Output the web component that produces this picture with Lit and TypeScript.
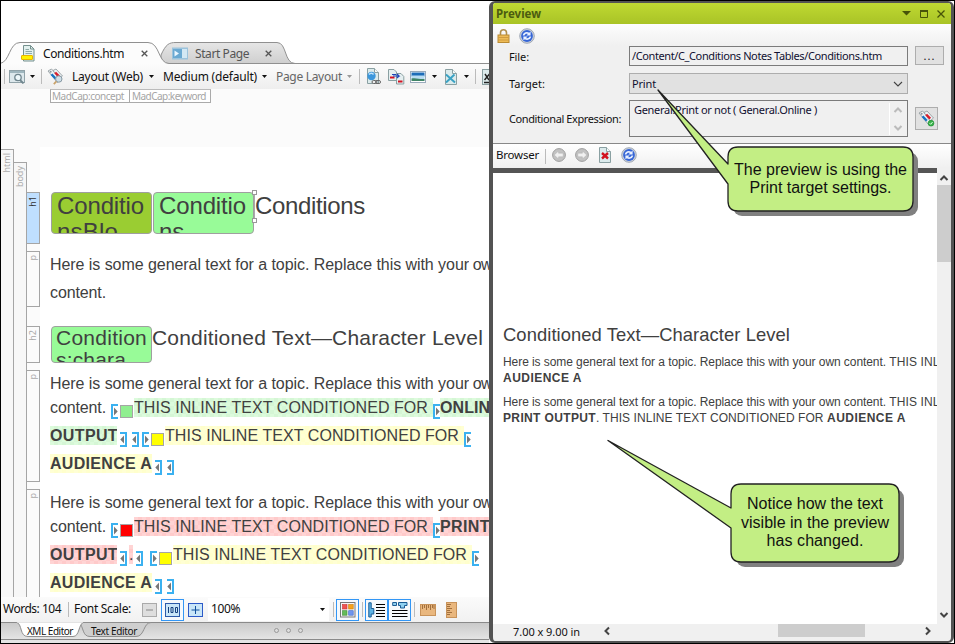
import { LitElement, html, css, svg, nothing } from "lit";
import { customElement, property } from "lit/decorators.js";
import { styleMap } from "lit/directives/style-map.js";

/** A run of text whose letter spacing is adjusted so that it fills a given width. */
@customElement("fit-text")
class FitText extends LitElement {
  @property({ type: Number }) w = 0;
  @property() text = "";
  static styles = css`
    :host { display: inline-block; white-space: pre; flex: none; }
    span { display: inline-block; white-space: pre; }
  `;
  firstUpdated() {
    const s = this.renderRoot.querySelector("span") as HTMLElement;
    const natural = s.getBoundingClientRect().width;
    s.style.letterSpacing = `${(this.w - natural) / this.text.length}px`;
  }
  render() {
    return html`<span>${this.text}</span>`;
  }
}

const t = (text: string, w: number) => html`<fit-text .w=${w} .text=${text}></fit-text>`;

type Run = { k: "text" | "open" | "close" | "sq"; gap?: number; text?: string; w?: number; box?: number; tone?: string; bold?: boolean };
const txt = (text: string, w: number, tone = "", box = 0, bold = false, gap = 0): Run => ({ k: "text", text, w, tone, box, bold, gap });
const open = (gap = 0): Run => ({ k: "open", gap });
const close = (gap = 0): Run => ({ k: "close", gap });
const sq = (tone: string, gap = 2): Run => ({ k: "sq", tone, gap });

const INTRO = "Here is some general text for a topic. Replace this with your";
const INLINE = "THIS INLINE TEXT CONDITIONED FOR";

const first: Run[][] = [
  [txt(INTRO, 419), txt(" own", 31)],
  [txt("content.", 56), open(5), sq("lime"), txt(INLINE, 294, "green", 299), open(0), txt("ONLINE", 61, "green", 61, true)],
  [txt("OUTPUT", 68, "green", 67, true), close(3), close(5), open(3), sq("gold"), txt(INLINE, 294, "yellow", 299), open(0)],
  [txt("AUDIENCE A", 102, "yellow", 102, true), close(3), close(5)],
];
const second: Run[][] = [
  [txt(INTRO, 419), txt(" own", 31)],
  [txt("content.", 56), open(5), sq("crimson"), txt(INLINE, 294, "pink", 299), open(0), txt("PRINT", 50, "pink", 60, true)],
  [txt("OUTPUT", 68, "pink", 67, true), close(3), txt(".", 4, "pink", 4, false, 2), close(3), open(7), sq("gold"), txt(INLINE, 294, "yellow", 299), open(0)],
  [txt("AUDIENCE A", 102, "yellow", 102, true), close(3), close(5)],
];

const bracket = (flip: boolean) => html`<svg class="mark" width="7" height="15" viewBox="0 0 7 15">
  <g transform=${flip ? "translate(7 0) scale(-1 1)" : ""}>
    <path d="M7 1H1V14H7" fill="none" stroke="#3bb1f0" stroke-width="2" />
    <path d="M3 3.5V11.5L6.7 7.5Z" fill="#777" />
  </g></svg>`;

const caret = (c = "#111") => html`<svg width="5" height="3" viewBox="0 0 5 3"><path d="M0 0H5L2.5 3Z" fill=${c} /></svg>`;

const cross = (c = "#555") => html`<svg width="7" height="7" viewBox="0 0 7 7"><path d="M.7 .7L6.3 6.3M6.3 .7L.7 6.3" stroke=${c} stroke-width="1.3" /></svg>`;

const refresh = html`<svg width="16" height="16" viewBox="0 0 16 16">
  <circle cx="8" cy="8" r="7.3" fill="#cdd3dc" stroke="#98a1b0" stroke-width=".9" />
  <circle cx="8" cy="8" r="5.9" fill="#3565d6" />
  <path d="M3.8 7.4C4 4.6 7.6 3 10.2 4.8L11.6 3.4V7.4H7.4L8.9 6C7.5 5.2 6 5.9 5.5 7.4ZM12.2 8.6C12 11.4 8.4 13 5.8 11.2L4.4 12.6V8.6H8.6L7.1 10C8.5 10.8 10 10.1 10.5 8.6Z" fill="#e8f0ff" />
</svg>`;

const roundArrow = (flip: boolean) => html`<svg width="14" height="14" viewBox="0 0 14 14">
  <g transform=${flip ? "translate(14 0) scale(-1 1)" : ""}>
    <circle cx="7" cy="7" r="6.4" fill="#c2c2c2" stroke="#9f9f9f" />
    <path d="M2.2 7L6.6 3V5.2H11.2V8.8H6.6V11Z" fill="#f0f0f0" stroke="#aaa" stroke-width=".4" />
  </g></svg>`;

const tags = (small = false) => html`<svg width="17" height="17" viewBox="0 0 17 17">
  <path d="M1 3L4.5 1L14 10.5L10.5 14.5Z" fill="#eef2f4" stroke="#8a9498" stroke-width=".8" />
  <path d="M6 2.5L9 1L15.5 8L12 11Z" fill="#eef2f4" stroke="#8a9498" stroke-width=".8" />
  <path d="M4.5 6.2L8.8 10.8" stroke="#1673c4" stroke-width="2.4" />
  <path d="M8.2 4.5L12.2 8.6" stroke="#d91c2b" stroke-width="2.4" />
  <circle cx="3.6" cy="3.7" r="1" fill="#8a9498" />
  ${small
    ? svg`<circle cx="13" cy="13.2" r="2.9" fill="#38b24a" stroke="#1f8a30" stroke-width=".6"/><path d="M11.6 13.2L12.7 14.3L14.6 12" fill="none" stroke="#d8ffdc" stroke-width="1"/>`
    : svg`<circle cx="11.8" cy="11" r="3.2" fill="#cfdfe8" stroke="#8799a3"/><path d="M9.4 13.4L6.8 16.2" stroke="#c9a26a" stroke-width="1.8"/>`}
</svg>`;

const pageFrame = svg`<path d="M1.5 .5H8.5L12.5 4.5V15.5H1.5Z" fill="#dcebec" stroke="#8aa0a2"/><path d="M8.5 .5V4.5H12.5" fill="#f5fafa" stroke="#8aa0a2"/>`;

const chevron = (d: string, c = "#444", s = 2) => html`<svg width="10" height="10" viewBox="0 0 10 10"><path d=${d} fill="none" stroke=${c} stroke-width=${s} /></svg>`;
const UP = "M1.5 7L5 3.5L8.5 7";
const DOWN = "M1.5 3L5 6.5L8.5 3";

@customElement("topic-editor")
class TopicEditor extends LitElement {
  static styles = css`
    :host { display: flex; flex-direction: column; width: 488px; flex: none; overflow: hidden; background: #fbfbfb; font: 12px/16px "Noto Sans", sans-serif; color: #111; }
    * { box-sizing: border-box; }
    svg { display: block; flex: none; }
    .tabs { position: relative; height: 63px; background: #fff; display: flex; align-items: center; padding: 42px 0 0 20px; }
    .tabs > .shape, .bottom > .shape { position: absolute; left: 0; top: 0; }
    .tab { position: relative; display: flex; align-items: center; }
    .tab.one { width: 151px; }
    .tab.one fit-text { margin-left: 8px; width: 98px; }
    .tab.two { color: #555; }
    .tab.two fit-text { margin-left: 7px; width: 70px; }
    .bar { height: 25px; display: flex; align-items: center; background: linear-gradient(#fcfcfc, #eee); padding-left: 3px; }
    .sep { width: 1px; height: 15px; background: #bbb; flex: none; }
    .dim { color: #666; }
    .crumbs { height: 58px; display: flex; padding-left: 49px; align-items: flex-start; }
    .crumbs div { border: 1px solid #aaa; border-top-color: #bbb; height: 14px; font: 10px/12px "Noto Sans", sans-serif; color: #a5a5a5; padding-left: 1px; width: 80px; background: #fff; }
    .crumbs div + div { margin-left: -1px; width: 82px; padding-left: 2px; }
    .body { flex: 1; min-height: 0; display: flex; overflow: hidden; }
    .col { width: 13px; flex: none; border: 1px solid #a5a5a5; border-left: 0; border-bottom: 0; background: #f7f7f7; color: #aaa; font: 9px/11px "Noto Sans", sans-serif; }
    .col.html { margin-top: 2px; }
    .col.bodyc { margin-top: 15px; }
    .v { writing-mode: vertical-rl; transform: rotate(180deg); margin: 3px 0 0 0; width: 11px; line-height: 11px; text-align: right; display: block; }
    .blocks { width: 13px; flex: none; display: flex; flex-direction: column; gap: 7px; padding-top: 45px; font: 9px/11px "Noto Sans", sans-serif; color: #aaa; }
    .blocks div { border: 1px solid #a5a5a5; border-left: 0; background: #fbfbfb; flex: none; }
    .b1 { height: 52px; } .blocks .b1 { background: #bfdfff; color: #333; }
    .b2 { height: 56px; }
    .b3 { height: 37px; margin-top: 12px; }
    .b4 { height: 112px; }
    .page { flex: 1; min-width: 0; background: #fff; padding: 45px 0 0 10px; color: #404040; font: 16px/19px "Liberation Sans", Arial, sans-serif; overflow: hidden; }
    .head { display: flex; align-items: flex-start; white-space: nowrap; }
    .h1 { height: 42px; font-size: 24px; line-height: 27px; }
    .h2 { height: 37px; font-size: 21px; line-height: 24px; margin: 20px 0 7px; }
    .chip { width: 101px; height: 100%; border: 1px solid #9f9f9f; border-radius: 4px; padding-left: 5px; overflow: hidden; flex: none; margin-left: 1px; }
    .h1 .chip { line-height: 26px; }
    .h2 .chip { padding-left: 4px; line-height: 22px; }
    .chip fit-text { display: block; }
    .olive { background: #9acd32; }
    .mint { background: #98fb98; }
    .anchor { width: 1px; height: 29px; background: #aaa; position: relative; }
    .anchor i { position: absolute; left: -2px; width: 5px; height: 5px; background: #fff; border: 1px solid #999; }
    .anchor i:first-child { top: -2px; } .anchor i:last-child { bottom: -2px; }
    .para { height: 112px; margin-bottom: 7px; }
    .para.short { height: 56px; margin: 16px 0 0; }
    .row { height: 28px; padding-top: 5px; display: flex; align-items: flex-start; white-space: pre; }
    .para:not(.short) .row:first-child { height: 23px; padding-top: 4px; }
    .run { height: 19px; flex: none; overflow: hidden; }
    .bold { font-weight: bold; }
    .green, .pink, .yellow { background-size: 8px 8px; }
    .green { background-image: conic-gradient(#d5f6d5 25%, #dcfbdc 0 50%, #d5f6d5 0 75%, #dcfbdc 0); }
    .pink { background-image: conic-gradient(#ffcaca 25%, #ffd4d4 0 50%, #ffcaca 0 75%, #ffd4d4 0); }
    .yellow { background-image: conic-gradient(#ffffcc 25%, #ffffd4 0 50%, #ffffcc 0 75%, #ffffd4 0); }
    .mark { margin-top: 6px; }
    .sq { width: 13px; height: 13px; margin: 7px 1px 0 0; border: 1px solid #a5a5a5; flex: none; }
    .lime { background: #90ee90; } .gold { background: #ff0; } .crimson { background: #f00; }
    .status { height: 25px; flex: none; display: flex; align-items: center; background: linear-gradient(#fbfbfb, #f1f1f1); padding-left: 2px; }
    .status > fit-text, .zoom fit-text { margin-top: -1px; }
    .zoom { width: 121px; height: 23px; background: #fff; display: flex; align-items: center; padding-left: 3px; justify-content: space-between; margin-left: 5px; }
    .zoom svg { margin-right: 4px; }
    .sel { width: 23px; height: 22px; border: 1px solid #3296f5; display: grid; place-items: center; flex: none; background: #f6f9fc; }
    .bottom { position: relative; height: 21px; flex: none; font: 10px/14px "Noto Sans", sans-serif; display: flex; padding: 2px 0 0 26px; }
    .bottom fit-text { position: relative; width: 64px; }
  `;

  private run(r: Run) {
    const gap = { marginLeft: `${r.gap ?? 0}px` };
    if (r.k === "text")
      return html`<span class="run ${r.tone} ${r.bold ? "bold" : ""}" style=${styleMap({ ...gap, ...(r.box ? { width: `${r.box}px` } : {}) })}>${t(r.text!, r.w!)}</span>`;
    if (r.k === "sq") return html`<span class="sq ${r.tone}" style=${styleMap(gap)}></span>`;
    return html`<span style=${styleMap(gap)}>${bracket(r.k === "close")}</span>`;
  }
  private para(rows: Run[][], cls = "") {
    return html`<div class="para ${cls}">${rows.map((r) => html`<div class="row">${r.map((x) => this.run(x))}</div>`)}</div>`;
  }
  private space(n: number) {
    return html`<span style=${styleMap({ width: `${n}px`, flex: "none" })}></span>`;
  }

  render() {
    const s = (n: number) => this.space(n);
    return html`
      <div class="tabs">
        <svg class="shape" width="488" height="63" viewBox="1 1 488 63">
          <defs><linearGradient id="g" x2="0" y2="1"><stop stop-color="#e6e6e6" /><stop offset="1" stop-color="#cfcfcf" /></linearGradient></defs>
          <path d="M161 63.5V55C166 44 169 42.5 176 42.5H277C287 42.5 284 63.5 295 63.5Z" fill="url(#g)" stroke="#909090" />
          <path d="M0 63.5H500" stroke="#909090" />
          <path d="M0 64.5V63.5C10 62 9 42.5 20 42.5H148C160 42.5 158 63.5 169 63.5V65H0Z" fill="#fcfcfc" />
          <path d="M0 63.5C10 62 9 42.5 20 42.5H148C160 42.5 158 63.5 169 63.5" fill="none" stroke="#909090" />
        </svg>
        <div class="tab one">
          <svg width="14" height="17" viewBox="0 0 14 17">
            <path d="M2.5 .5H9.5L13 4V16H2.5Z" fill="#e2f0ee" stroke="#75908e" /><path d="M9.5 .5V4H13" fill="none" stroke="#75908e" />
            <path d="M4.5 4.5H8M4.5 6.5H11M4.5 8.5H11" stroke="#8fa9a7" /><rect x=".5" y="10.5" width="11" height="4" rx=".5" fill="#fff200" stroke="#e8b400" />
          </svg>
          ${t("Conditions.htm", 81)}${cross()}
        </div>
        <div class="tab two">
          <svg width="16" height="13" viewBox="0 0 16 13"><rect width="16" height="12" y=".5" fill="#9cc3dc" /><rect x="1" y="2" width="9" height="9" fill="#6aa9d2" /><path d="M2.5 3.5L7 6.5L2.5 9.5Z" fill="#eaf6ff" /><rect x="10" y="2" width="5" height="9" fill="#d3e8f4" /></svg>
          ${t("Start Page", 54)}${cross()}
        </div>
      </div>

      <div class="bar">
        <span class="sep"></span>${s(4)}
        <svg width="17" height="14" viewBox="0 0 17 14"><rect x=".5" y=".5" width="15" height="12" fill="#dde8ec" stroke="#90a2a8" /><path d="M1 2H15" stroke="#9fb6be" stroke-width="2" /><circle cx="9" cy="7.5" r="3.2" fill="#eef8fb" stroke="#70868e" stroke-width="1.3" /><path d="M11 10L14.5 13.5" stroke="#70868e" stroke-width="1.8" /></svg>
        ${s(4)}${caret()}${s(6)}<span class="sep"></span>${s(5)}${tags()}${s(8)}
        ${t("Layout (Web)", 71)}${s(6)}${caret()}${s(9)}${t("Medium (default)", 94)}${s(5)}${caret()}${s(9)}
        <span class="dim">${t("Page Layout", 66)}</span>${s(5)}${caret("#999")}${s(7)}<span class="sep"></span>${s(6)}
        <svg width="15" height="17" viewBox="0 0 15 17">${pageFrame}<circle cx="5.5" cy="8" r="4.2" fill="#3b97dc" /><path d="M3 6.5C4.5 4.5 6.5 5 7.5 6.5" stroke="#bfe2fa" stroke-width="1.4" fill="none" /><rect x="6" y="12.5" width="5" height="3" rx="1.5" fill="#eee" stroke="#666" /><rect x="9.5" y="12.5" width="5" height="3" rx="1.5" fill="none" stroke="#666" /></svg>
        ${s(7)}
        <svg width="17" height="16" viewBox="0 0 17 16"><path d="M.5 .5H6L8.5 3V11.5H.5Z" fill="#e5eff0" stroke="#8aa0a2" /><path d="M8.5 4.5H13L15.8 7.5V15H8.5Z" fill="#e5eff0" stroke="#8aa0a2" /><path d="M2 8.5H6.5M10 12.5H14.5" stroke="#d31321" stroke-width="2" /><path d="M4 5.5H8M5 7H11L9 5M11 7L9 9" stroke="#1b45b8" stroke-width="1.2" fill="none" /></svg>
        ${s(5)}
        <svg width="16" height="12" viewBox="0 0 16 12"><rect x=".5" y=".5" width="15" height="11" fill="#fff" stroke="#9ab" /><rect x="1.5" y="1.5" width="13" height="4" fill="#1c6cb8" /><rect x="1.5" y="4.5" width="13" height="4" fill="#b8dcf2" /><path d="M1.5 7.5C6 6.5 10 8.6 14.5 8V10H1.5Z" fill="#3f8466" /></svg>
        ${s(6)}${caret()}${s(7)}
        <svg width="14" height="16" viewBox="0 0 14 16">${pageFrame}<path d="M2 13.5L10.5 5.5M2 5.5L11 13.5" stroke="#3aa2c4" stroke-width="1.9" /></svg>
        ${s(6)}${caret()}${s(6)}<span class="sep"></span>${s(6)}
        <svg width="13" height="16" viewBox="0 0 13 16"><rect x=".5" y=".5" width="15" height="15" fill="#dcebec" stroke="#8aa0a2" /><path d="M3 5L7 11M7.5 5L2.5 11M2 13.5H13" stroke="#222" stroke-width="1.4" /></svg>
      </div>

      <div class="crumbs"><div>${t("MadCap:concept", 72)}</div><div>${t("MadCap:keyword", 74)}</div></div>

      <div class="body">
        <div class="col html"><span class="v">html</span></div>
        <div class="col bodyc"><span class="v">body</span></div>
        <div class="blocks">
          <div class="b1"><span class="v">h1</span></div><div class="b2"><span class="v">p</span></div>
          <div class="b3"><span class="v">h2</span></div><div class="b4"><span class="v">p</span></div><div class="b4"><span class="v">p</span></div>
        </div>
        <div class="page">
          <div class="head h1">
            <div class="chip olive">${t("Conditio", 87)}${t("nsBlo", 61)}</div>
            <div class="chip mint">${t("Conditio", 87)}${t("ns", 25)}</div>
            <span class="anchor"><i></i><i></i></span>${t("Conditions", 110)}
          </div>
          ${this.para([[txt(INTRO, 419), txt(" own", 31)], [txt("content.", 56)]], "short")}
          <div class="head h2"><div class="chip mint">${t("Condition", 91)}${t("s:chara", 70)}</div>${t("Conditioned Text—Character Level", 331)}</div>
          ${this.para(first)}${this.para(second)}
        </div>
      </div>

      <div class="status">
        ${t("Words: 104", 58)}${s(7)}<span class="sep"></span>${s(5)}${t("Font Scale:", 57)}${s(11)}
        <svg width="15" height="14" viewBox="0 0 15 14"><rect x=".5" y=".5" width="14" height="13" fill="#dedede" stroke="#aaa" /><path d="M4 7H11" stroke="#888" /></svg>
        ${s(4)}
        <span class="sel"><svg width="15" height="14" viewBox="0 0 15 14"><rect x=".5" y=".5" width="14" height="13" fill="#c9e6f8" stroke="#2c5aa8" /><path d="M3.5 4V10M6 4.5H8V9.5H6ZM10.5 4.5H12.5V9.5H10.5Z" fill="none" stroke="#153f7c" /></svg></span>
        ${s(4)}
        <svg width="15" height="14" viewBox="0 0 15 14"><rect x=".5" y=".5" width="14" height="13" fill="#c9e6f8" stroke="#2c5ac8" /><path d="M3.5 7H11.5M7.5 3V11" stroke="#0f4f9c" /></svg>
        <span class="zoom">${t("100%", 29)}${caret()}</span>
        ${s(4)}<span class="sep"></span>${s(2)}
        <span class="sel"><svg width="16" height="16" viewBox="0 0 16 16"><rect x=".5" y=".5" width="14.5" height="14.5" fill="#f5f5f8" stroke="#777" /><rect x="2.5" y="2.5" width="4.5" height="4.5" fill="#ef5350" stroke="#c33" stroke-width=".6" /><rect x="8.7" y="2.5" width="4.5" height="4.5" fill="#f6a21c" stroke="#c97a00" stroke-width=".6" /><rect x="2.5" y="8.7" width="4.5" height="4.5" fill="#63bb58" stroke="#3a8a32" stroke-width=".6" /><rect x="8.7" y="8.7" width="4.5" height="4.5" fill="#6f95ee" stroke="#3b62c0" stroke-width=".6" /></svg></span>
        ${s(3)}<span class="sep"></span>${s(2)}
        <span class="sel"><svg width="18" height="16" viewBox="0 0 18 16"><path d="M.8 .8H3.2V6.5H5.8V12H3.2V15H.8Z" fill="#5fb4e4" stroke="#1a5b94" /><path d="M8 2.5H17M8 5.5H17M8 8.5H17M8 11.5H17M8 14.5H17" stroke="#000" /></svg></span>
        <span class="sel"><svg width="16" height="17" viewBox="0 0 16 17"><path d="M.7 1.5H4.5V4.5H.7ZM6.5 1.5H15V4.5H12.5V7H8.5V4.5H6.5Z" fill="#8fd0f0" stroke="#1a5b94" /><path d="M0 9.5H15.5M0 12.5H15.5M0 15.5H15.5" stroke="#000" /></svg></span>
        ${s(3)}<span class="sep"></span>${s(5)}
        <svg width="16" height="12" viewBox="0 0 16 12"><rect x=".5" y=".5" width="15" height="11" fill="#e9b77e" stroke="#c8935a" /><path d="M2.5 1V5M4.5 1V4M6.5 1V6M8.5 1V4M10.5 1V6M12.5 1V4M14 1V5" stroke="#8f5e2c" stroke-width=".8" /></svg>
        ${s(10)}
        <svg width="12" height="16" viewBox="0 0 12 16"><rect x=".5" y=".5" width="10" height="15" fill="#e9b77e" stroke="#c8935a" /><path d="M1 2.5H5M1 4.5H4M1 6.5H6M1 8.5H4M1 10.5H6M1 12.5H4" stroke="#8f5e2c" stroke-width=".8" /></svg>
      </div>

      <div class="bottom">
        <svg class="shape" width="488" height="21" viewBox="1 622 488 21">
          <defs><linearGradient id="b" x2="0" y2="1"><stop stop-color="#c8c8c8" /><stop offset="1" stop-color="#e4e4e4" /></linearGradient></defs>
          <rect y="622" width="500" height="17" fill="url(#b)" /><rect y="640" width="500" height="3" fill="#e4e4e4" />
          <path d="M0 622.5H500M0 639.5H500" stroke="#8a8a8a" />
          <path d="M79 622.5C84 627 82 636.5 90 636.5H136C145 636.5 143 622.5 151 622.5Z" fill="#cfcfcf" stroke="#8f8f8f" />
          <path d="M16 622C23 624 19 636.5 28 636.5H73C80 636.5 78 624 84 622Z" fill="#fff" stroke="#8f8f8f" /><path d="M17 622H83" stroke="#fff" />
          <g fill="#ddd" stroke="#999"><circle cx="276.5" cy="630.5" r="2" /><circle cx="288.5" cy="630.5" r="2" /><circle cx="300.5" cy="630.5" r="2" /></g>
        </svg>
        ${t("XML Editor", 46)}${t("Text Editor", 46)}
      </div>`;
  }
}

@customElement("preview-window")
class PreviewWindow extends LitElement {
  static styles = css`
    :host { display: block; flex: 1; min-width: 0; font: 11px/14px "Noto Sans", sans-serif; color: #111; background: #fbfbfb; }
    * { box-sizing: border-box; }
    svg { display: block; flex: none; }
    .win { height: 642px; border: solid #535353; border-width: 2px 3px 2px 4px; border-radius: 6px; background: #f0f0f0; display: flex; flex-direction: column; overflow: hidden; }
    .title { height: 21px; background: linear-gradient(#bfd932, #a9c326); display: flex; align-items: center; padding: 0 6px 0 3px; color: #4c5c10; font: bold 11.5px/16px "Noto Sans", sans-serif; flex: none; }
    .title .fill { flex: 1; }
    .title svg { margin-left: 9px; }
    .tools { height: 22px; flex: none; display: flex; align-items: center; gap: 8px; padding: 2px 0 0 4px; background: linear-gradient(#fdfdfd, #f0f0f0); }
    .form { height: 97px; flex: none; display: grid; grid-template-columns: 120px 279px 30px; column-gap: 0; grid-template-rows: 27px 27px 38px; padding-left: 16px; align-items: start; }
    .lbl { padding-top: 4px; }
    .lbl.exp { padding-top: 12px; }
    .field { height: 20px; border: 1px solid #7b7b7b; display: flex; align-items: center; padding: 0 4px 0 2px; justify-content: space-between; color: #101030; }
    .select { height: 21px; border-color: #adadad; background: #e1e1e1; }
    .area { height: 37px; align-items: flex-start; padding: 2px 1px 1px 4px; }
    .spin { width: 17px; height: 32px; display: flex; flex-direction: column; justify-content: space-between; align-items: center; padding: 2px 0; border-left: 1px solid #fff; }
    .btn { border: 1px solid #adadad; background: #e1e1e1; margin-left: 7px; display: grid; place-items: center; width: 29px; height: 19px; }
    .btn.sq { width: 23px; height: 23px; margin-top: 7px; }
    .browser { height: 25px; flex: none; border-top: 1px solid #888; background: linear-gradient(#fff, #f0f0f0); display: flex; align-items: center; padding-left: 3px; font-size: 11.5px; }
    .browser > fit-text { margin-top: -2px; }
    .sep { width: 1px; height: 15px; background: #bbb; margin: 0 6px; }
    .browser svg { margin: -2px 9px 0 0; }
    .rule { height: 5px; background: #555; flex: none; margin-right: 14px; }
    .view { flex: 1; min-height: 0; display: flex; background: #fff; }
    .doc { flex: 1; min-width: 0; overflow: hidden; padding: 152px 0 0 10px; font: 12px/16px "Liberation Sans", Arial, sans-serif; color: #404040; }
    .h { font-size: 18.4px; line-height: 20px; margin-bottom: 9px; height: 20px; }
    .l { display: flex; height: 16px; }
    .gap { margin-top: 8px; }
    b { font-weight: bold; }
    .vs { width: 14px; margin-top: -5px; background: #f0f0f0; display: flex; flex-direction: column; align-items: center; padding: 5px 0 4px; position: relative; }
    .vs i { width: 14px; height: 77px; background: #cdcdcd; margin-top: 2px; }
    .vs svg:last-child { margin-top: auto; }
    .hs { height: 13px; flex: none; display: flex; align-items: center; padding: 0 18px 0 20px; margin-bottom: 4px; }
    .hs fit-text { margin-top: 2px; }
    .hs i { width: 87px; height: 13px; background: #cdcdcd; margin-left: 166px; margin-right: auto; }
    .hs svg { margin-left: 22px; }
  `;
  render() {
    return html`<div class="win">
      <div class="title">${t("Preview", 45)}<span class="fill"></span>
        <svg width="9" height="5" viewBox="0 0 9 5"><path d="M0 0H9L4.5 4.6Z" fill="#475409" /></svg>
        <svg width="8" height="8" viewBox="0 0 8 8"><path d="M.5 .5H7.5V7.5H.5Z" fill="none" stroke="#475409" /><path d="M0 1H8" stroke="#475409" stroke-width="2" /></svg>
        <svg width="8" height="8" viewBox="0 0 8 8"><path d="M.5 .5L7.5 7.5M7.5 .5L.5 7.5" stroke="#475409" stroke-width="1.3" /></svg>
      </div>
      <div class="tools">
        <svg width="14" height="14" viewBox="0 0 14 14"><path d="M3.5 7V3.8A3 3 0 0 1 9.5 3.8V7" fill="none" stroke="#b08f4c" stroke-width="1.6" /><rect x="1" y="6" width="11" height="7.5" fill="#eebb55" stroke="#b98a32" /><path d="M1 8.5H12M1 11H12" stroke="#cf9c40" /></svg>
        ${refresh}
      </div>
      <div class="form">
        <span class="lbl">${t("File:", 20)}</span><div class="field">${t("/Content/C_Conditions Notes Tables/Conditions.htm", 250)}</div><div class="btn">${t("...", 12)}</div>
        <span class="lbl">${t("Target:", 36)}</span><div class="field select">${t("Print", 24)}${chevron("M1 3L5 7L9 3", "#444", 1.1)}</div><span></span>
        <span class="lbl exp">${t("Conditional Expression:", 112)}</span>
        <div class="field area">${t("General.Print or not ( General.Online )", 183)}<span class="spin">${chevron(UP, "#bbb")}${chevron(DOWN, "#bbb")}</span></div>
        <div class="btn sq">${tags(true)}</div>
      </div>
      <div class="browser">${t("Browser", 43)}<span class="sep"></span>${roundArrow(false)}${roundArrow(true)}
        <svg width="14" height="16" viewBox="0 0 14 16">${pageFrame}<path d="M4 6L10 11.5M10 6L4 11.5" stroke="#d2121e" stroke-width="2.4" /></svg>
        ${refresh}
      </div>
      <div class="rule"></div>
      <div class="view">
        <div class="doc">
          <div class="h">${t("Conditioned Text—Character Level", 287)}</div>
          <div class="l">${t("Here is some general text for a topic. Replace this with your own content.", 383)}${t(" THIS INLINE", 74)}</div>
          <div class="l"><b>${t("AUDIENCE A", 79)}</b></div>
          <div class="l gap">${t("Here is some general text for a topic. Replace this with your own content.", 383)}${t(" THIS INLINE", 74)}</div>
          <div class="l"><b>${t("PRINT OUTPUT", 93)}</b>${t(". THIS INLINE TEXT CONDITIONED FOR ", 231)}<b>${t("AUDIENCE A", 79)}</b></div>
        </div>
        <div class="vs">${chevron(UP)}<i></i>${chevron(DOWN)}</div>
      </div>
      <div class="hs">${t("7.00 x 9.00 in", 67)}${chevron("M7 1.5L3.5 5L7 8.5")}<i></i>${chevron("M3 1.5L6.5 5L3 8.5")}</div>
    </div>`;
  }
}

@customElement("call-out")
class CallOut extends LitElement {
  @property({ type: Number }) x = 0;
  @property({ type: Number }) y = 0;
  @property({ type: Number }) w = 0;
  @property({ type: Number }) h = 0;
  @property({ attribute: false }) tip = [0, 0, 0, 0];
  @property({ attribute: false }) lines: [string, number][] = [];
  static styles = css`
    :host { display: contents; }
    .box { position: absolute; display: flex; flex-direction: column; align-items: center; justify-content: center; font: 16px/18.5px "Liberation Sans", Arial, sans-serif; color: #111; }
    svg { position: absolute; left: 0; top: 0; overflow: visible; }
    fit-text { position: relative; }
  `;
  render() {
    const { w, h } = this;
    const [tx, ty, a, b] = this.tip;
    const r = 10;
    const body = `M${r} 0H${w - r}Q${w} 0 ${w} ${r}V${h - r}Q${w} ${h} ${w - r} ${h}H${r}Q0 ${h} 0 ${h - r}`;
    return html`<div class="box" style=${styleMap({ left: `${this.x}px`, top: `${this.y}px`, width: `${w}px`, height: `${h}px` })}>
      <svg width=${w} height=${h}>
        <rect x="5" y="5" width=${w} height=${h} rx="9" fill="#808080" />
        <path d="${body}V${b}L${tx} ${ty}L0 ${a}V${r}Q0 0 ${r} 0Z" fill="#c3ee84" stroke="#222" stroke-width="1.3" stroke-linejoin="round" />
      </svg>
      ${this.lines.map(([s, n]) => (s ? t(s, n) : nothing))}
    </div>`;
  }
}

@customElement("app-root")
class AppRoot extends LitElement {
  static styles = css`
    :host { display: flex; position: relative; box-sizing: border-box; width: 955px; height: 644px; border: 1px solid #000; overflow: hidden; background: #fff; }
  `;
  render() {
    return html`<topic-editor></topic-editor><preview-window></preview-window>
      <call-out .x=${727} .y=${146} .w=${185} .h=${64} .tip=${[-70, -57, 17, 37]} .lines=${[["The preview is using the", 173], ["Print target settings.", 142]]}></call-out>
      <call-out .x=${730} .y=${483} .w=${168} .h=${78} .tip=${[-123, -43.5, 24, 44]} .lines=${[["Notice how the text", 136], ["visible in the preview", 148], ["has changed.", 97]]}></call-out>`;
  }
}
